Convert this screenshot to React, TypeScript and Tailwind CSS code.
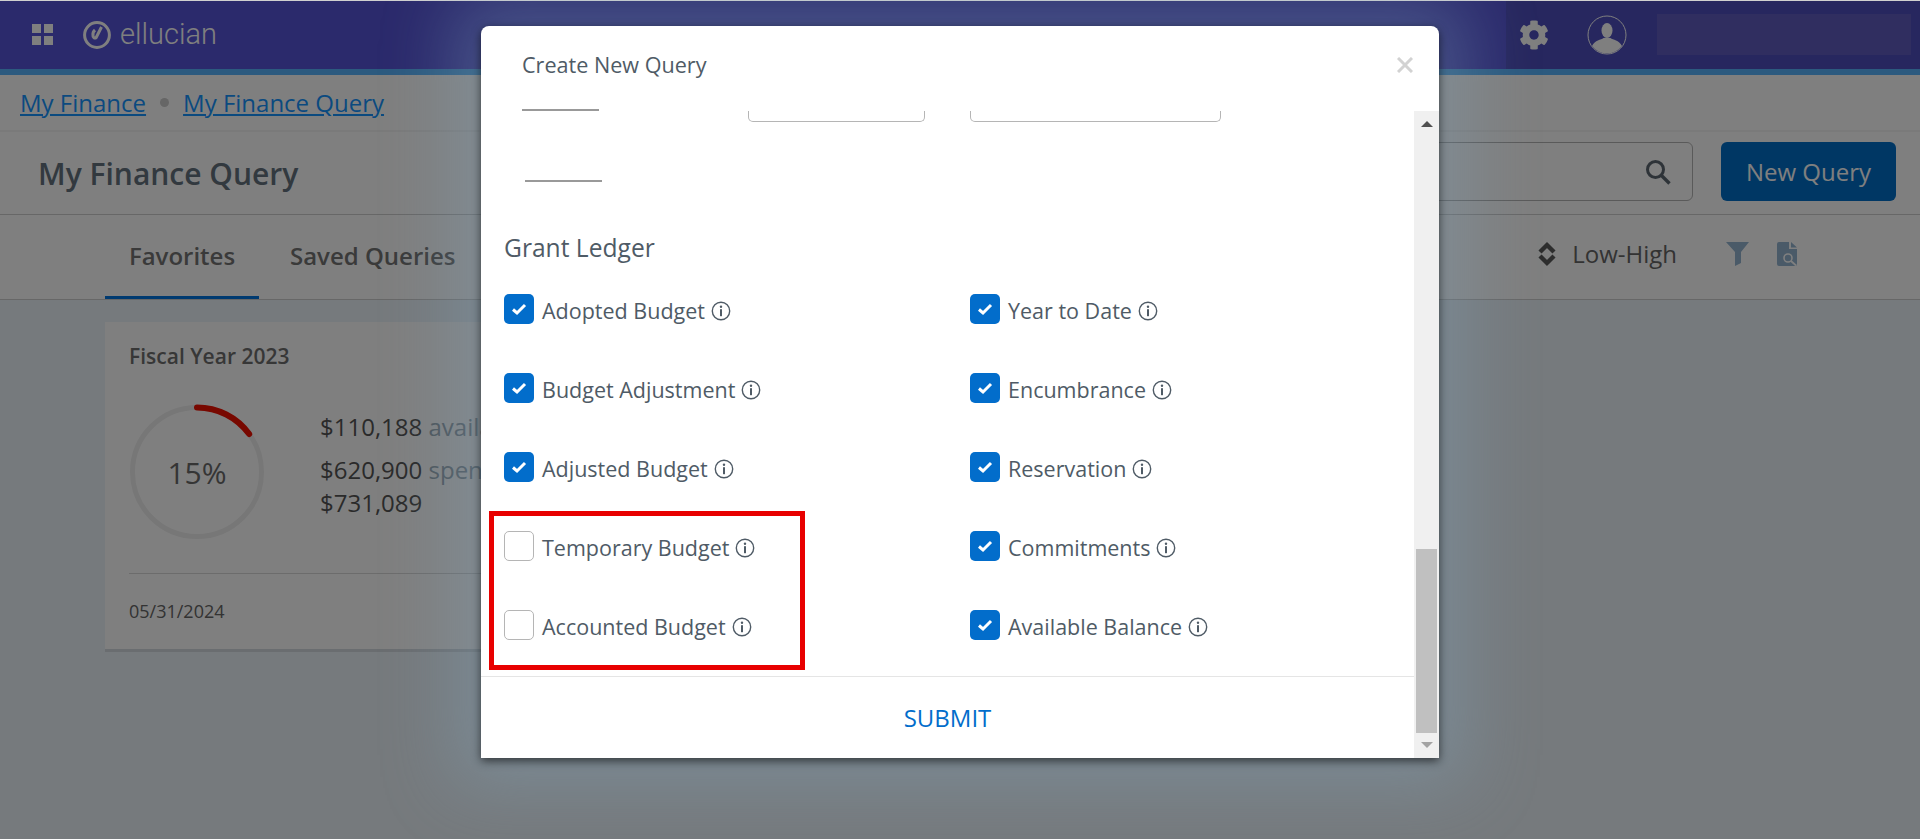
import React from 'react';
import { FaCog } from 'react-icons/fa';

const leftRows = [
  { label: 'Adopted Budget', checked: true },
  { label: 'Budget Adjustment', checked: true },
  { label: 'Adjusted Budget', checked: true },
  { label: 'Temporary Budget', checked: false },
  { label: 'Accounted Budget', checked: false },
];

const rightRows = ['Year to Date', 'Encumbrance', 'Reservation', 'Commitments', 'Available Balance'];

function InfoIcon() {
  return (
    <svg width="20" height="20" viewBox="0 0 20 20" className="mt-[7px] ml-[6px] shrink-0 text-[#4f5b66]">
      <circle cx="10" cy="10" r="8.7" fill="none" stroke="currentColor" strokeWidth="1.4" />
      <circle cx="10" cy="5.8" r="1.2" fill="currentColor" />
      <rect x="9" y="8.2" width="2" height="7" fill="currentColor" />
    </svg>
  );
}

function Check({ label, checked }: { label: string; checked: boolean }) {
  return (
    <div className="flex h-[79px] items-start">
      {checked ? (
        <div className="flex h-[30px] w-[30px] shrink-0 items-center justify-center rounded-[5px] bg-[#026dcb]">
          <svg width="16" height="14" viewBox="0 0 16 14">
            <path d="M2 7.5 L6 11 L14 3" fill="none" stroke="white" strokeWidth="3" />
          </svg>
        </div>
      ) : (
        <div className="h-[30px] w-[30px] shrink-0 rounded-[5px] border border-[#b5b5b5] bg-white" />
      )}
      <div className="ml-[8px] flex items-start">
        <span className="text-[21.5px] leading-[34px] font-medium text-[#4f5b66]">{label}</span>
        <InfoIcon />
      </div>
    </div>
  );
}

function FinanceCard() {
  return (
    <div className="mt-[22px] ml-[105px] h-[327px] w-[640px] bg-white pl-[24px] shadow-[0_3px_0_rgba(0,0,0,0.1)]">
      <div className="pt-[19px] text-[21px] leading-[30px] font-semibold text-[#6f6f6f]">Fiscal Year 2023</div>
      <div className="mt-[33px] flex h-[136px] items-center">
        <div className="relative h-[136px] w-[136px] shrink-0">
          <svg width="136" height="136" viewBox="0 0 136 136">
            <circle cx="68" cy="68" r="64.5" fill="none" stroke="#efefef" strokeWidth="5" />
            <path d="M68 3.5 A64.5 64.5 0 0 1 120.2 30.1" fill="none" stroke="#f01000" strokeWidth="6" strokeLinecap="round" />
          </svg>
          <div className="absolute inset-0 flex items-center justify-center text-[30px] text-[#6b6b6b]">15%</div>
        </div>
        <div className="ml-[55px] pb-[9px] text-[24px] text-[#555]">
          <div className="-mt-[6px] leading-[40px]">
            $110,188 <span className="text-[#98a8b4]">available</span>
          </div>
          <div className="mt-[3px] leading-[40px]">
            $620,900 <span className="text-[#98a8b4]">spent</span>
          </div>
          <div className="-mt-[7px] leading-[40px]">$731,089</div>
        </div>
      </div>
      <div className="mt-[33px] h-px bg-[#d8d8d8]" />
      <div className="pt-[24px] text-[18px] leading-[27px] text-[#666]">05/31/2024</div>
    </div>
  );
}

export default function App() {
  return (
    <div className="relative h-[839px] w-[1920px] overflow-hidden font-['Open_Sans',sans-serif]">
      <div className="flex h-full flex-col bg-[#ecf4fa]">
        {/* Top bar */}
        <div className="flex h-[69px] shrink-0 bg-[#5654d8]">
          <div className="flex flex-1 items-center pl-[32px]">
            <div className="grid w-[21px] grid-cols-2 gap-[3px]">
              <div className="h-[9px] bg-white" />
              <div className="h-[9px] bg-white" />
              <div className="h-[9px] bg-white" />
              <div className="h-[9px] bg-white" />
            </div>
            <svg width="30" height="30" viewBox="0 0 30 30" className="ml-[29px]">
              <circle cx="15" cy="15" r="12.4" fill="none" stroke="white" strokeWidth="3" />
              <path d="M19.5 7 L14.2 17.5 A2 2 0 0 1 11 15.5 A6 6 0 0 1 13 10" fill="none" stroke="white" strokeWidth="3" />
            </svg>
            <span className="ml-[8px] font-['Roboto',sans-serif] text-[29px] font-light text-white">ellucian</span>
          </div>
          <div className="flex w-[414px] items-center bg-[#4e4ebe] pl-[13px]">
            <FaCog className="h-[30px] w-[30px] text-white" />
            <svg width="40" height="40" viewBox="0 0 40 40" className="ml-[38px]">
              <circle cx="20" cy="20" r="19" fill="none" stroke="white" strokeWidth="1" />
              <ellipse cx="20" cy="15.5" rx="5.5" ry="7.5" fill="white" />
              <path d="M5 31 C8 25 14 25 16.5 23 H23.5 C26 25 32 25 35 31 A19 19 0 0 1 5 31 Z" fill="white" />
            </svg>
            <div className="ml-[30px] h-[41px] w-[254px] bg-[#605cc0]" />
          </div>
        </div>
        <div className="h-[6px] shrink-0 bg-[#58b4ff]" />

        {/* Breadcrumb */}
        <div className="flex h-[57px] shrink-0 items-center border-b-2 border-[#f4f4f4] bg-white pl-[20px] text-[24px] text-[#1694ff]">
          <span className="underline">My Finance</span>
          <span className="mx-[14px] h-[9px] w-[9px] rounded-full bg-[#cccccc]" />
          <span className="underline">My Finance Query</span>
        </div>

        {/* Title + search */}
        <div className="flex h-[83px] shrink-0 items-center justify-between border-b border-[#cfcfcf] bg-white pr-[24px] pb-[3px] pl-[38px]">
          <h1 className="mt-[3px] text-[30px] font-semibold text-[#64727f]">My Finance Query</h1>
          <div className="flex items-center">
            <div className="flex h-[59px] w-[600px] items-center justify-end rounded-[6px] border border-[#b4b4b4] pr-[20px]">
              <svg width="28" height="28" viewBox="0 0 28 28">
                <circle cx="11.5" cy="11.5" r="8" fill="none" stroke="#5c6670" strokeWidth="3" />
                <path d="M17.5 17.5 L25.5 25.5" stroke="#5c6670" strokeWidth="3.4" />
              </svg>
            </div>
            <button className="ml-[28px] h-[59px] w-[175px] rounded-[6px] bg-[#006ec8] text-[24px] text-white">New Query</button>
          </div>
        </div>

        {/* Tabs */}
        <div className="flex h-[85px] shrink-0 items-stretch justify-between border-b border-[#cfcfcf] bg-white pr-[123px] pl-[105px]">
          <div className="flex text-[24px] font-semibold text-[#757575]">
            <div className="flex w-[154px] items-center justify-center border-b-[3px] border-[#0074e0]">Favorites</div>
            <div className="ml-[31px] flex items-center pb-[3px]">Saved Queries</div>
          </div>
          <div className="flex items-center pb-[6px]">
            <svg width="18" height="26" viewBox="0 0 18 26">
              <path d="M2 11 L9 4 L16 11" fill="none" stroke="#5a5a5a" strokeWidth="4.4" />
              <path d="M2 15 L9 22 L16 15" fill="none" stroke="#5a5a5a" strokeWidth="4.4" />
            </svg>
            <span className="ml-[16px] text-[24px] text-[#666]">Low-High</span>
            <svg width="23" height="24" viewBox="0 0 23 24" className="ml-[49px]">
              <path d="M0 0 H23 L15 10 V21 L9 24 V10 Z" fill="#94b4d0" />
            </svg>
            <svg width="20" height="24" viewBox="0 0 20 24" className="ml-[28px]">
              <path d="M2 0 H12 V7 H20 V22 A2 2 0 0 1 18 24 H2 A2 2 0 0 1 0 22 V2 A2 2 0 0 1 2 0 Z" fill="#94b4d0" />
              <path d="M14 0 L20 5.5 H14 Z" fill="#94b4d0" />
              <circle cx="11" cy="16" r="4" fill="none" stroke="white" strokeWidth="1.6" />
              <path d="M14 19 L19 23.5" stroke="white" strokeWidth="1.8" />
            </svg>
          </div>
        </div>

        {/* Content */}
        <div className="flex-1">
          <FinanceCard />
        </div>
      </div>

      {/* Backdrop */}
      <div className="absolute inset-0 border-t border-[#d0d0d0] bg-black/50" />

      {/* Modal */}
      <div className="absolute top-[26px] left-[481px] flex h-[732px] w-[958px] flex-col rounded-t-[8px] bg-white shadow-[0_3px_10px_rgba(0,0,0,0.6),0_0_70px_30px_rgba(135,170,195,0.32)]">
        <div className="flex h-[82px] shrink-0 items-start justify-between pt-[23px] pr-[26px] pl-[41px]">
          <h2 className="text-[21.6px] leading-[32px] font-medium text-[#4f5b66]">Create New Query</h2>
          <svg width="16" height="16" viewBox="0 0 16 16" className="mt-[8px]">
            <path d="M1 1 L15 15 M15 1 L1 15" stroke="#d2d2d2" strokeWidth="3" />
          </svg>
        </div>

        <div className="flex min-h-0 flex-1">
          <div className="flex min-w-0 flex-1 flex-col">
            <div className="min-h-0 flex-1 overflow-hidden">
              <div className="flex items-start">
                <div className="mt-[1px] ml-[41px] h-[2px] w-[77px] bg-[#999999]" />
                <div className="mt-[3px] ml-[149px] h-[11px] w-[177px] rounded-b-[5px] border-x border-b border-[#b5b5b5]" />
                <div className="mt-[3px] ml-[45px] h-[11px] w-[251px] rounded-b-[5px] border-x border-b border-[#b5b5b5]" />
              </div>
              <div className="mt-[58px] ml-[44px] h-[2px] w-[77px] bg-[#999999]" />
              <h3 className="mt-[49px] ml-[23px] text-[24.6px] leading-[33px] font-medium text-[#4f5b66]">Grant Ledger</h3>
              <div className="mt-[30px] ml-[23px] grid grid-cols-[466px_1fr]">
                <div>
                  {leftRows.map((row) => (
                    <Check key={row.label} label={row.label} checked={row.checked} />
                  ))}
                </div>
                <div>
                  {rightRows.map((label) => (
                    <Check key={label} label={label} checked />
                  ))}
                </div>
              </div>
            </div>
            <div className="flex h-[82px] shrink-0 items-center justify-center border-t border-[#e5e5e5] text-[24px] text-[#026dcb]">
              SUBMIT
            </div>
          </div>

          {/* Scrollbar */}
          <div className="mt-[3px] flex w-[25px] shrink-0 flex-col items-center bg-[#f0f0f0]">
            <svg width="12" height="6" viewBox="0 0 12 6" className="mt-[10px]">
              <path d="M0 6 L6 0 L12 6 Z" fill="#505050" />
            </svg>
            <div className="mt-[422px] h-[184px] w-[21px] bg-[#c0c0c0]" />
            <svg width="12" height="6" viewBox="0 0 12 6" className="mt-[9px]">
              <path d="M0 0 L12 0 L6 6 Z" fill="#a3a3a3" />
            </svg>
          </div>
        </div>

        {/* Annotation */}
        <div className="absolute top-[485px] left-[8px] h-[159px] w-[316px] border-[5px] border-[#e80000]" />
      </div>
    </div>
  );
}
